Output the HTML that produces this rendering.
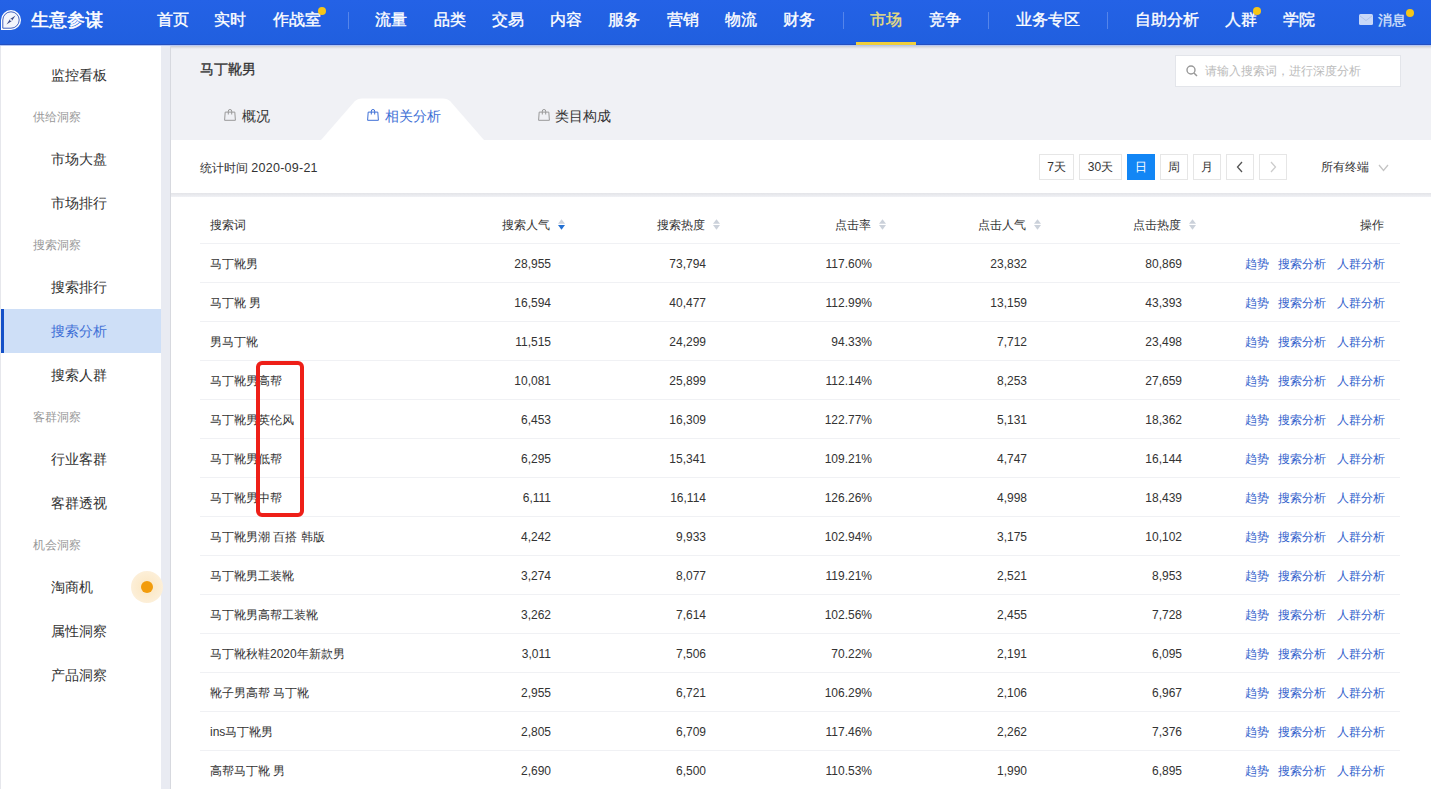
<!DOCTYPE html><html><head><meta charset="utf-8"><style>
*{box-sizing:border-box;margin:0;padding:0}
html,body{width:1431px;height:789px;overflow:hidden}
body{position:relative;background:#F0F1F5;font-family:"Liberation Sans",sans-serif;color:#333;font-size:12px}
.a{position:absolute;white-space:nowrap}
#hdr{position:absolute;left:0;top:0;width:1431px;height:45px;background:linear-gradient(#2462E6,#205FDF);border-bottom:1px solid #2450C0}
#hdrline{position:absolute;left:0;top:45px;width:1431px;height:1px;background:#B4C7F4}
.nav{position:absolute;top:0;line-height:40px;font-size:16px;-webkit-text-stroke:0.35px currentColor;color:#fff;white-space:nowrap}
.sep{position:absolute;top:12px;width:1px;height:17px;background:#5585EA}
.dot{position:absolute;width:8px;height:8px;border-radius:50%;background:#F5C518}
#side{position:absolute;left:0;top:46px;width:161px;height:743px;background:#fff;border-left:1px solid #E6E7EC}
#gut{position:absolute;left:161px;top:46px;width:10px;height:743px;background:#E9EBF2;border-right:1px solid #D7D9DF}
.si{position:absolute;left:0;width:160px;height:44px;line-height:44px;font-size:14px;color:#333;padding-left:51px;white-space:nowrap}
.sg{position:absolute;left:0;width:160px;height:40px;line-height:40px;font-size:12px;color:#999;padding-left:33px;white-space:nowrap}
.card{position:absolute;background:#fff}
.btn{position:absolute;top:154px;height:26px;border:1px solid #E6E6E6;background:#fff;text-align:center;line-height:24px;font-size:12px;color:#333}
.row{position:absolute;left:200px;width:1200px;height:39px;border-bottom:1px solid #F0F1F4}
.c{position:absolute;top:1px;line-height:38px;font-size:12px;color:#333;white-space:nowrap}
.r{text-align:right}
.lnk{color:#3362CC}
.sort{position:absolute;top:14px;width:7px;height:11px}
</style></head><body>
<div id="hdr"></div><div id="hdrline"></div>
<svg class="a" style="left:0;top:9px" width="22" height="22" viewBox="0 0 22 22">
<path d="M1 21 V11 A10 10 0 1 1 11 21 Z" fill="#fff"/>
<path d="M2.8 19.2 V11 A8.2 8.2 0 1 1 11 19.2 Z" fill="#F4F6FC" stroke="#2C4FB5" stroke-width="0.9"/>
<path d="M15.5 6.5 L12 11.8 L10.2 10 Z" fill="#3B4A8A"/><path d="M6.5 15.5 L10 10.2 L11.8 12 Z" fill="#3B4A8A"/>
<circle cx="11" cy="11" r="0.9" fill="#fff"/>
</svg>
<div class="nav" style="left:31px;font-size:18px;-webkit-text-stroke:0.55px #fff">生意参谋</div>
<div class="nav" style="left:157px;color:#fff">首页</div>
<div class="nav" style="left:214px;color:#fff">实时</div>
<div class="nav" style="left:273px;color:#fff">作战室</div>
<div class="nav" style="left:375px;color:#fff">流量</div>
<div class="nav" style="left:434px;color:#fff">品类</div>
<div class="nav" style="left:492px;color:#fff">交易</div>
<div class="nav" style="left:550px;color:#fff">内容</div>
<div class="nav" style="left:608px;color:#fff">服务</div>
<div class="nav" style="left:667px;color:#fff">营销</div>
<div class="nav" style="left:725px;color:#fff">物流</div>
<div class="nav" style="left:783px;color:#fff">财务</div>
<div class="nav" style="left:870px;color:#E9DF7E">市场</div>
<div class="nav" style="left:929px;color:#fff">竞争</div>
<div class="nav" style="left:1016px;color:#fff">业务专区</div>
<div class="nav" style="left:1135px;color:#fff">自助分析</div>
<div class="nav" style="left:1225px;color:#fff">人群</div>
<div class="nav" style="left:1283px;color:#fff">学院</div>
<div class="sep" style="left:348px"></div>
<div class="sep" style="left:843px"></div>
<div class="sep" style="left:988px"></div>
<div class="sep" style="left:1107px"></div>
<div class="a" style="left:856px;top:42px;width:60px;height:3px;background:#F0CF3C"></div>
<div class="dot" style="left:318px;top:7px"></div>
<div class="dot" style="left:1253px;top:7px"></div>
<div class="dot" style="left:1406px;top:9px"></div>
<div class="nav" style="left:1378px;font-size:14px;color:#D6E2FA">消息</div>
<svg class="a" style="left:1359px;top:14px" width="14" height="11" viewBox="0 0 14 11"><rect x="0" y="0" width="14" height="11" rx="1.5" fill="#C8D8F8"/><path d="M1 2 L7 6.5 L13 2" fill="none" stroke="#AFC3EC" stroke-width="1"/></svg>
<div id="side"></div><div id="gut"></div>
<div class="si" style="top:53px">监控看板</div>
<div class="sg" style="top:97px">供给洞察</div>
<div class="si" style="top:137px">市场大盘</div>
<div class="si" style="top:181px">市场排行</div>
<div class="sg" style="top:225px">搜索洞察</div>
<div class="si" style="top:265px">搜索排行</div>
<div class="si" style="top:309px;left:1px;background:#CEDFF7;color:#3E6FD6;border-left:3px solid #1450C8;padding-left:47px">搜索分析</div>
<div class="si" style="top:353px">搜索人群</div>
<div class="sg" style="top:397px">客群洞察</div>
<div class="si" style="top:437px">行业客群</div>
<div class="si" style="top:481px">客群透视</div>
<div class="sg" style="top:525px">机会洞察</div>
<div class="si" style="top:565px">淘商机</div>
<div class="si" style="top:609px">属性洞察</div>
<div class="si" style="top:653px">产品洞察</div>
<div class="a" style="left:131px;top:571px;width:32px;height:32px;border-radius:50%;background:radial-gradient(circle,#FBE6C0 0%,#FCEDD3 55%,#FDF3E4 100%)"></div>
<div class="a" style="left:141px;top:581px;width:12px;height:12px;border-radius:50%;background:#F29C0C"></div>
<div class="a" style="left:171px;top:46px;width:1260px;height:3px;background:linear-gradient(#CDCFD4,#F0F1F5)"></div>
<div class="a" style="left:200px;top:58px;font-size:14px;line-height:22px;-webkit-text-stroke:0.3px #333;color:#333">马丁靴男</div>
<div class="a" style="left:1175px;top:55px;width:226px;height:32px;background:#fff;border:1px solid #E3E5EA"></div>
<svg class="a" style="left:1186px;top:65px" width="12" height="12" viewBox="0 0 12 12"><circle cx="5" cy="5" r="4" fill="none" stroke="#999" stroke-width="1.4"/><path d="M8 8 L11 11" stroke="#999" stroke-width="1.5"/></svg>
<div class="a" style="left:1205px;top:62px;font-size:12px;line-height:18px;color:#BBB">请输入搜索词，进行深度分析</div>
<svg class="a" style="left:224px;top:109px" width="12" height="12" viewBox="0 0 12 12"><path d="M1.2 3.1 H10.8 L11.4 11.3 H0.6 Z" fill="none" stroke="#999" stroke-width="1" stroke-linejoin="round"/><path d="M4.3 5.5 V2.1 Q4.3 0.5 6 0.5 Q7.7 0.5 7.7 2.1 V5.5" fill="none" stroke="#999" stroke-width="1"/></svg>
<div class="a" style="left:242px;top:105px;font-size:14px;line-height:22px;color:#333">概况</div>
<svg class="a" style="left:321px;top:98px" width="163" height="42" viewBox="0 0 163 42"><path d="M0 42 L33.5 3.6 Q36.5 0.5 41 0.5 L122 0.5 Q126.5 0.5 129.5 3.6 L163 42 Z" fill="#fff"/></svg>
<svg class="a" style="left:367px;top:109px" width="12" height="12" viewBox="0 0 12 12"><path d="M1.2 3.1 H10.8 L11.4 11.3 H0.6 Z" fill="none" stroke="#3E6FD6" stroke-width="1" stroke-linejoin="round"/><path d="M4.3 5.5 V2.1 Q4.3 0.5 6 0.5 Q7.7 0.5 7.7 2.1 V5.5" fill="none" stroke="#3E6FD6" stroke-width="1"/></svg>
<div class="a" style="left:385px;top:105px;font-size:14px;line-height:22px;color:#3E6FD6">相关分析</div>
<svg class="a" style="left:538px;top:109px" width="12" height="12" viewBox="0 0 12 12"><path d="M1.2 3.1 H10.8 L11.4 11.3 H0.6 Z" fill="none" stroke="#999" stroke-width="1" stroke-linejoin="round"/><path d="M4.3 5.5 V2.1 Q4.3 0.5 6 0.5 Q7.7 0.5 7.7 2.1 V5.5" fill="none" stroke="#999" stroke-width="1"/></svg>
<div class="a" style="left:555px;top:105px;font-size:14px;line-height:22px;color:#333">类目构成</div>
<div class="card" style="left:171px;top:140px;width:1260px;height:53px"></div>
<div class="a" style="left:171px;top:193px;width:1260px;height:4px;background:linear-gradient(#E3E4E8,#F0F1F5)"></div>
<div class="a" style="left:200px;top:159px;font-size:12px;line-height:18px;color:#333">统计时间 <span style="font-size:12.5px;letter-spacing:0.25px">2020-09-21</span></div>
<div class="btn" style="left:1039px;width:35px">7天</div>
<div class="btn" style="left:1079px;width:43px">30天</div>
<div class="btn" style="left:1127px;width:28px;background:#1286F5;border-color:#1286F5;color:#fff">日</div>
<div class="btn" style="left:1160px;width:28px">周</div>
<div class="btn" style="left:1193px;width:28px">月</div>
<div class="btn" style="left:1226px;width:28px"></div>
<div class="btn" style="left:1259px;width:28px"></div>
<svg class="a" style="left:1235px;top:161px" width="10" height="12" viewBox="0 0 10 12"><path d="M7 1 L2.5 6 L7 11" fill="none" stroke="#555" stroke-width="1.3"/></svg>
<svg class="a" style="left:1268px;top:161px" width="10" height="12" viewBox="0 0 10 12"><path d="M3 1 L7.5 6 L3 11" fill="none" stroke="#CCC" stroke-width="1.3"/></svg>
<div class="a" style="left:1321px;top:158px;font-size:12px;line-height:18px;color:#333">所有终端</div>
<svg class="a" style="left:1378px;top:164px" width="11" height="8" viewBox="0 0 11 8"><path d="M1 1 L5.5 6.5 L10 1" fill="none" stroke="#C4C4C4" stroke-width="1.3"/></svg>
<div class="card" style="left:171px;top:197px;width:1260px;height:600px"></div>
<div class="row" style="top:205px">
<div class="c" style="left:10px">搜索词</div>
<div class="c r" style="right:850px">搜索人气</div>
<svg class="sort" style="left:358px" viewBox="0 0 7 11"><path d="M0 4.7 L3.5 0.2 L7 4.7 Z" fill="#CBD1DA"/><path d="M0 6 L3.5 10.7 L7 6 Z" fill="#2370D2"/></svg>
<div class="c r" style="right:695px">搜索热度</div>
<svg class="sort" style="left:513px" viewBox="0 0 7 11"><path d="M0 4.7 L3.5 0.2 L7 4.7 Z" fill="#CBD1DA"/><path d="M0 6 L3.5 10.7 L7 6 Z" fill="#CBD1DA"/></svg>
<div class="c r" style="right:529px">点击率</div>
<svg class="sort" style="left:679px" viewBox="0 0 7 11"><path d="M0 4.7 L3.5 0.2 L7 4.7 Z" fill="#CBD1DA"/><path d="M0 6 L3.5 10.7 L7 6 Z" fill="#CBD1DA"/></svg>
<div class="c r" style="right:374px">点击人气</div>
<svg class="sort" style="left:834px" viewBox="0 0 7 11"><path d="M0 4.7 L3.5 0.2 L7 4.7 Z" fill="#CBD1DA"/><path d="M0 6 L3.5 10.7 L7 6 Z" fill="#CBD1DA"/></svg>
<div class="c r" style="right:219px">点击热度</div>
<svg class="sort" style="left:989px" viewBox="0 0 7 11"><path d="M0 4.7 L3.5 0.2 L7 4.7 Z" fill="#CBD1DA"/><path d="M0 6 L3.5 10.7 L7 6 Z" fill="#CBD1DA"/></svg>
<div class="c r" style="right:16px">操作</div>
</div>
<div class="row" style="top:244px">
<div class="c" style="left:10px">马丁靴男</div>
<div class="c r" style="right:849px">28,955</div>
<div class="c r" style="right:694px">73,794</div>
<div class="c r" style="right:528px">117.60%</div>
<div class="c r" style="right:373px">23,832</div>
<div class="c r" style="right:218px">80,869</div>
<div class="c lnk" style="left:1045px">趋势</div><div class="c lnk" style="left:1078px">搜索分析</div><div class="c lnk" style="left:1137px">人群分析</div>
</div>
<div class="row" style="top:283px">
<div class="c" style="left:10px">马丁靴 男</div>
<div class="c r" style="right:849px">16,594</div>
<div class="c r" style="right:694px">40,477</div>
<div class="c r" style="right:528px">112.99%</div>
<div class="c r" style="right:373px">13,159</div>
<div class="c r" style="right:218px">43,393</div>
<div class="c lnk" style="left:1045px">趋势</div><div class="c lnk" style="left:1078px">搜索分析</div><div class="c lnk" style="left:1137px">人群分析</div>
</div>
<div class="row" style="top:322px">
<div class="c" style="left:10px">男马丁靴</div>
<div class="c r" style="right:849px">11,515</div>
<div class="c r" style="right:694px">24,299</div>
<div class="c r" style="right:528px">94.33%</div>
<div class="c r" style="right:373px">7,712</div>
<div class="c r" style="right:218px">23,498</div>
<div class="c lnk" style="left:1045px">趋势</div><div class="c lnk" style="left:1078px">搜索分析</div><div class="c lnk" style="left:1137px">人群分析</div>
</div>
<div class="row" style="top:361px">
<div class="c" style="left:10px">马丁靴男高帮</div>
<div class="c r" style="right:849px">10,081</div>
<div class="c r" style="right:694px">25,899</div>
<div class="c r" style="right:528px">112.14%</div>
<div class="c r" style="right:373px">8,253</div>
<div class="c r" style="right:218px">27,659</div>
<div class="c lnk" style="left:1045px">趋势</div><div class="c lnk" style="left:1078px">搜索分析</div><div class="c lnk" style="left:1137px">人群分析</div>
</div>
<div class="row" style="top:400px">
<div class="c" style="left:10px">马丁靴男英伦风</div>
<div class="c r" style="right:849px">6,453</div>
<div class="c r" style="right:694px">16,309</div>
<div class="c r" style="right:528px">122.77%</div>
<div class="c r" style="right:373px">5,131</div>
<div class="c r" style="right:218px">18,362</div>
<div class="c lnk" style="left:1045px">趋势</div><div class="c lnk" style="left:1078px">搜索分析</div><div class="c lnk" style="left:1137px">人群分析</div>
</div>
<div class="row" style="top:439px">
<div class="c" style="left:10px">马丁靴男低帮</div>
<div class="c r" style="right:849px">6,295</div>
<div class="c r" style="right:694px">15,341</div>
<div class="c r" style="right:528px">109.21%</div>
<div class="c r" style="right:373px">4,747</div>
<div class="c r" style="right:218px">16,144</div>
<div class="c lnk" style="left:1045px">趋势</div><div class="c lnk" style="left:1078px">搜索分析</div><div class="c lnk" style="left:1137px">人群分析</div>
</div>
<div class="row" style="top:478px">
<div class="c" style="left:10px">马丁靴男中帮</div>
<div class="c r" style="right:849px">6,111</div>
<div class="c r" style="right:694px">16,114</div>
<div class="c r" style="right:528px">126.26%</div>
<div class="c r" style="right:373px">4,998</div>
<div class="c r" style="right:218px">18,439</div>
<div class="c lnk" style="left:1045px">趋势</div><div class="c lnk" style="left:1078px">搜索分析</div><div class="c lnk" style="left:1137px">人群分析</div>
</div>
<div class="row" style="top:517px">
<div class="c" style="left:10px">马丁靴男潮 百搭 韩版</div>
<div class="c r" style="right:849px">4,242</div>
<div class="c r" style="right:694px">9,933</div>
<div class="c r" style="right:528px">102.94%</div>
<div class="c r" style="right:373px">3,175</div>
<div class="c r" style="right:218px">10,102</div>
<div class="c lnk" style="left:1045px">趋势</div><div class="c lnk" style="left:1078px">搜索分析</div><div class="c lnk" style="left:1137px">人群分析</div>
</div>
<div class="row" style="top:556px">
<div class="c" style="left:10px">马丁靴男工装靴</div>
<div class="c r" style="right:849px">3,274</div>
<div class="c r" style="right:694px">8,077</div>
<div class="c r" style="right:528px">119.21%</div>
<div class="c r" style="right:373px">2,521</div>
<div class="c r" style="right:218px">8,953</div>
<div class="c lnk" style="left:1045px">趋势</div><div class="c lnk" style="left:1078px">搜索分析</div><div class="c lnk" style="left:1137px">人群分析</div>
</div>
<div class="row" style="top:595px">
<div class="c" style="left:10px">马丁靴男高帮工装靴</div>
<div class="c r" style="right:849px">3,262</div>
<div class="c r" style="right:694px">7,614</div>
<div class="c r" style="right:528px">102.56%</div>
<div class="c r" style="right:373px">2,455</div>
<div class="c r" style="right:218px">7,728</div>
<div class="c lnk" style="left:1045px">趋势</div><div class="c lnk" style="left:1078px">搜索分析</div><div class="c lnk" style="left:1137px">人群分析</div>
</div>
<div class="row" style="top:634px">
<div class="c" style="left:10px">马丁靴秋鞋2020年新款男</div>
<div class="c r" style="right:849px">3,011</div>
<div class="c r" style="right:694px">7,506</div>
<div class="c r" style="right:528px">70.22%</div>
<div class="c r" style="right:373px">2,191</div>
<div class="c r" style="right:218px">6,095</div>
<div class="c lnk" style="left:1045px">趋势</div><div class="c lnk" style="left:1078px">搜索分析</div><div class="c lnk" style="left:1137px">人群分析</div>
</div>
<div class="row" style="top:673px">
<div class="c" style="left:10px">靴子男高帮 马丁靴</div>
<div class="c r" style="right:849px">2,955</div>
<div class="c r" style="right:694px">6,721</div>
<div class="c r" style="right:528px">106.29%</div>
<div class="c r" style="right:373px">2,106</div>
<div class="c r" style="right:218px">6,967</div>
<div class="c lnk" style="left:1045px">趋势</div><div class="c lnk" style="left:1078px">搜索分析</div><div class="c lnk" style="left:1137px">人群分析</div>
</div>
<div class="row" style="top:712px">
<div class="c" style="left:10px">ins马丁靴男</div>
<div class="c r" style="right:849px">2,805</div>
<div class="c r" style="right:694px">6,709</div>
<div class="c r" style="right:528px">117.46%</div>
<div class="c r" style="right:373px">2,262</div>
<div class="c r" style="right:218px">7,376</div>
<div class="c lnk" style="left:1045px">趋势</div><div class="c lnk" style="left:1078px">搜索分析</div><div class="c lnk" style="left:1137px">人群分析</div>
</div>
<div class="row" style="top:751px">
<div class="c" style="left:10px">高帮马丁靴 男</div>
<div class="c r" style="right:849px">2,690</div>
<div class="c r" style="right:694px">6,500</div>
<div class="c r" style="right:528px">110.53%</div>
<div class="c r" style="right:373px">1,990</div>
<div class="c r" style="right:218px">6,895</div>
<div class="c lnk" style="left:1045px">趋势</div><div class="c lnk" style="left:1078px">搜索分析</div><div class="c lnk" style="left:1137px">人群分析</div>
</div>
<div class="a" style="left:256px;top:361px;width:48px;height:156px;border:4px solid #EE1F18;border-radius:6px"></div>
</body></html>
